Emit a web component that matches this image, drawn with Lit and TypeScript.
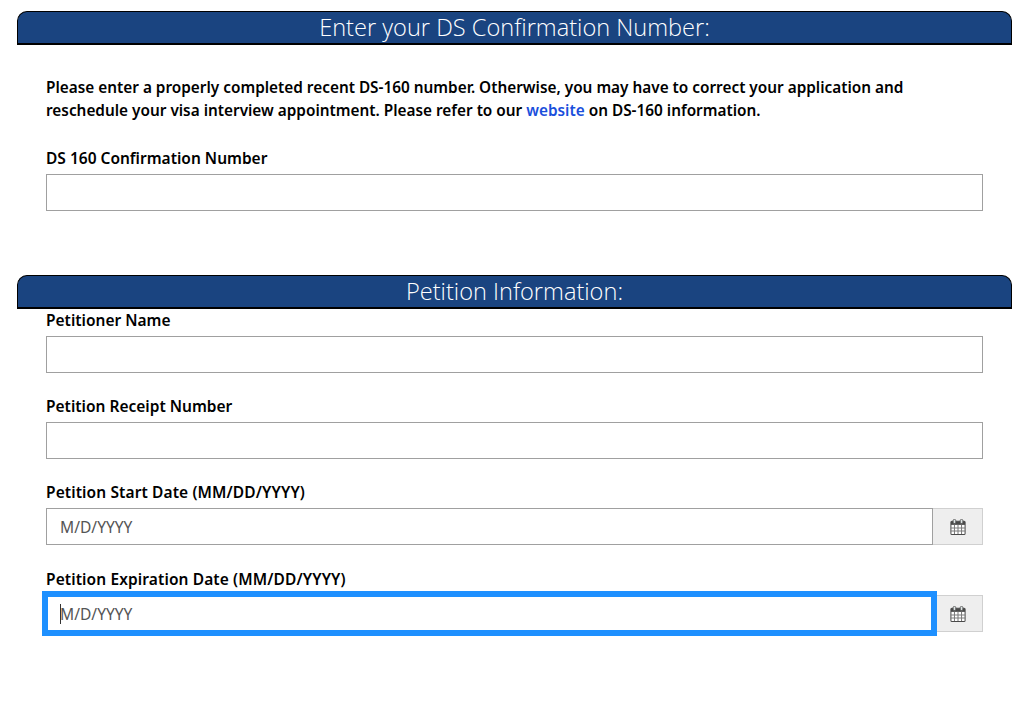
import { LitElement, html, css } from "lit";
import { customElement } from "lit/decorators.js";

const calendar = html`<svg width="16" height="16" viewBox="0.5 0.2 15 15.8" aria-hidden="true">
  <rect x="1" y="2.5" width="14" height="13" rx="1" fill="#fff" stroke="#4a4a4a" stroke-width="1"/>
  <rect x="1" y="2.5" width="14" height="3.5" fill="#4a4a4a"/>
  <path d="M1 9h14M1 12h14M4.5 6v9M8 6v9M11.5 6v9" stroke="#7a7a7a" stroke-width="1" fill="none"/>
  <rect x="3.2" y="0.6" width="2.6" height="4" rx="1.2" fill="#dfe6e6" stroke="#4a4a4a" stroke-width="0.8"/>
  <rect x="10.2" y="0.6" width="2.6" height="4" rx="1.2" fill="#dfe6e6" stroke="#4a4a4a" stroke-width="0.8"/>
</svg>`;

@customElement("app-root")
export class AppRoot extends LitElement {
  static styles = css`
    :host {
      display: block;
      width: 1024px;
      height: 710px;
      overflow: hidden;
      background: #fff;
      font-family: "Noto Sans", "Open Sans", sans-serif;
      color: #000;
      box-sizing: border-box;
      padding: 11px 12px 0 17px;
    }
    .bar {
      height: 34px;
      box-sizing: border-box;
      background: #1a4480;
      border: 1px solid #000;
      border-bottom-width: 2px;
      border-radius: 10px 10px 0 0;
      color: #fff;
      font-family: "Open Sans", sans-serif;
      font-weight: 300;
      font-size: 23.6px;
      line-height: 30px;
      text-align: center;
    }
    .body {
      padding: 0 29px;
    }
    .intro {
      margin: 31px 0 0;
      font-size: 15.35px;
      font-weight: 600;
      line-height: 23px;
    }
    .intro a {
      color: #1a4fdc;
      text-decoration: none;
    }
    .first {
      margin-top: 25px;
    }
    .second-bar {
      margin-top: 64px;
    }
    .field {
      display: block;
      margin-bottom: 22px;
    }
    .field.wide {
      margin-bottom: 23px;
    }
    label {
      display: block;
      font-size: 15.5px;
      font-weight: 600;
      line-height: 22px;
      height: 20px;
      margin-bottom: 7px;
    }
    label.date {
      letter-spacing: 0.11px;
    }
    .row {
      display: flex;
      height: 37px;
      position: relative;
    }
    input {
      flex: 1;
      min-width: 0;
      height: 37px;
      box-sizing: border-box;
      border: 1px solid #a0a0a0;
      background: #fff;
      padding: 0 13px;
      font: 15.6px "Noto Sans", sans-serif;
      outline: none;
    }
    input::placeholder {
      color: #555;
      opacity: 1;
    }
    .ring input {
      box-shadow: 0 0 0 4px #1e90ff, inset 0 0 0 1px #1e90ff;
      border-color: #1e90ff;
      position: relative;
    }
    .btn {
      width: 50px;
      height: 37px;
      box-sizing: border-box;
      background: #eee;
      border: 1px solid #d0d0d0;
      border-left: none;
      display: flex;
      align-items: center;
      justify-content: center;
    }
    .caret {
      position: absolute;
      left: 14px;
      top: 9px;
      width: 1px;
      height: 20px;
      background: #333;
    }
  `;

  render() {
    return html`
      <div class="bar">Enter your DS Confirmation Number:</div>
      <div class="body">
        <p class="intro">
          Please enter a properly completed recent DS-160 number. Otherwise, you may have to correct your application and
          reschedule your visa interview appointment. Please refer to our <a href="#">website</a> on DS-160 information.
        </p>
        <div class="first">
          <label>DS 160 Confirmation Number</label>
          <div class="row"><input type="text" /></div>
        </div>
      </div>
      <div class="bar second-bar">Petition Information:</div>
      <div class="body">
        <div class="field">
          <label>Petitioner Name</label>
          <div class="row"><input type="text" /></div>
        </div>
        <div class="field">
          <label>Petition Receipt Number</label>
          <div class="row"><input type="text" /></div>
        </div>
        <div class="field wide">
          <label class="date">Petition Start Date (MM/DD/YYYY)</label>
          <div class="row"><input type="text" placeholder="M/D/YYYY" /><div class="btn">${calendar}</div></div>
        </div>
        <div class="field">
          <label class="date">Petition Expiration Date (MM/DD/YYYY)</label>
          <div class="row ring"><input type="text" placeholder="M/D/YYYY" /><span class="caret"></span><div class="btn">${calendar}</div></div>
        </div>
      </div>
    `;
  }
}
